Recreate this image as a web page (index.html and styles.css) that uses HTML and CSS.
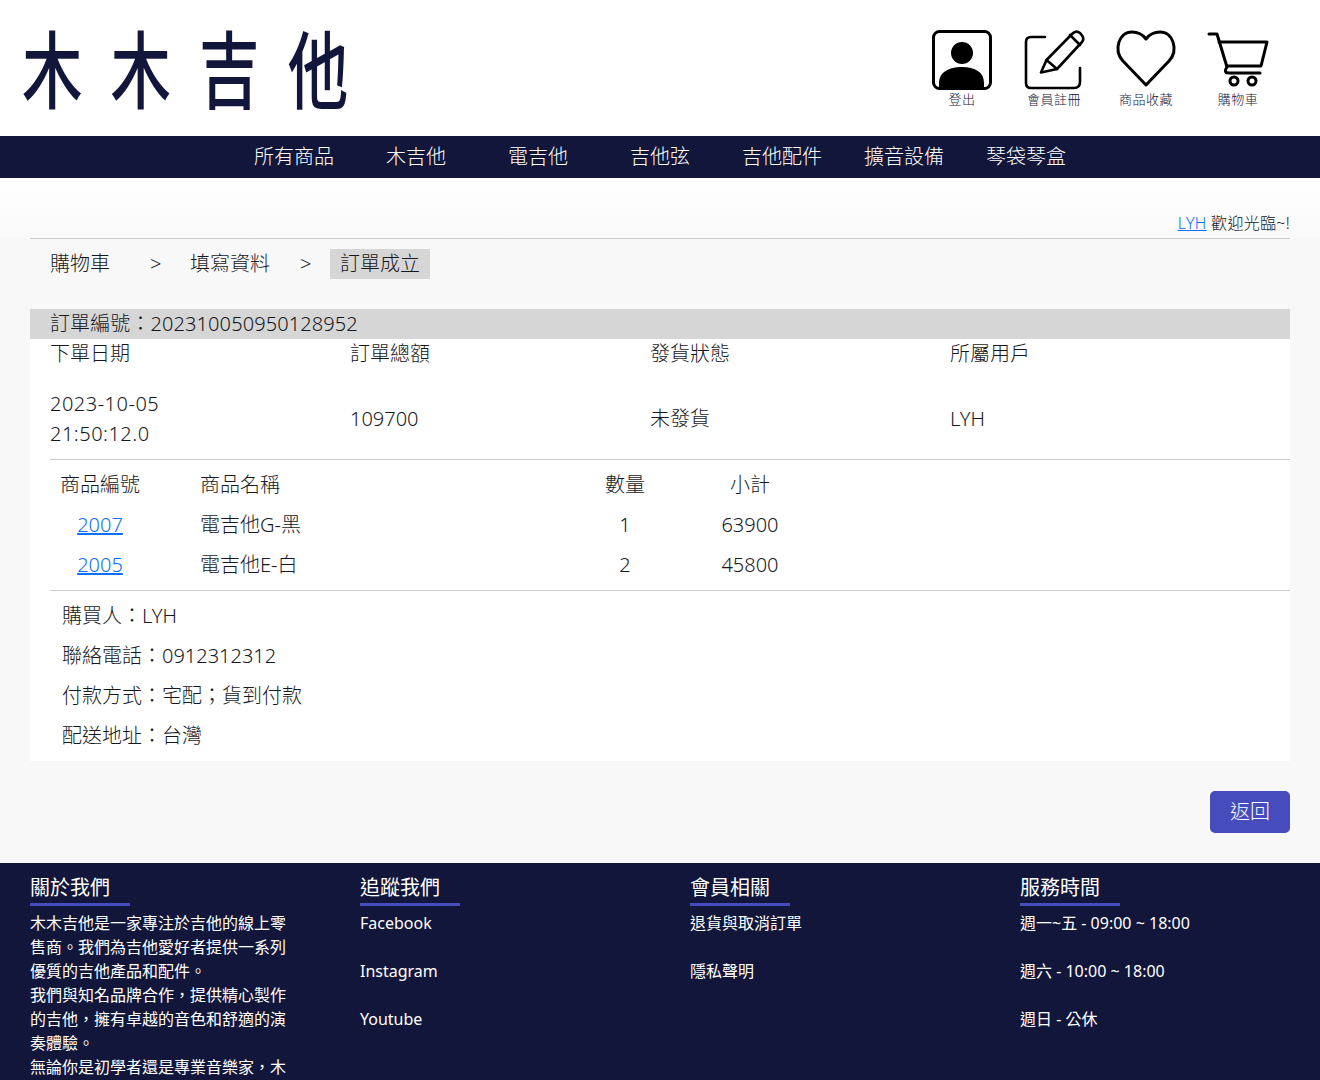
FILE: index.html
```html
<!DOCTYPE html>
<html lang="zh-Hant">
<head>
    <meta charset="UTF-8">
    <title>木木吉他</title>
    <link rel="stylesheet" href="styles.css">
</head>
<body>
    <!-- Header -->
    <header class="header">
        <a class="logo">木木吉他</a>
        <div class="tools">
            <a class="tool">
                <svg viewBox="0 0 60 60" width="60" height="60">
                    <rect x="1.5" y="1.5" width="57" height="57" rx="6" fill="none" stroke="#000" stroke-width="3"/>
                    <circle cx="30" cy="23" r="11"/>
                    <path d="M7 57 V53 C7 42 17 37 30 37 C43 37 52 42 52 53 V57 Z"/>
                </svg>
                <span>登出</span>
            </a>
            <a class="tool">
                <svg viewBox="0 0 60 60" width="60" height="60" fill="none" stroke="#000" stroke-width="2.6" stroke-linecap="round" stroke-linejoin="round">
                    <path d="M21 7 H7 Q2 7 2 12 V53 Q2 58 7 58 H50 Q56 58 56 52 V38"/>
                    <path d="M17 42.500 L22.500 30 L48 4 Q52 0 56 3 L58 5.500 Q60.500 9 58 12 L33 39 Z"/>
                    <path d="M22.500 30 L33 39 M46 5 L56 15"/>
                </svg>
                <span>會員註冊</span>
            </a>
            <a class="tool">
                <svg viewBox="0 0 60 60" width="60" height="60" fill="none" stroke="#000" stroke-width="3" stroke-linejoin="round">
                    <path d="M30 55 L7 31 C-3 20 3 2 16 2 C22 2 27 5 30 9 C33 5 38 2 44 2 C57 2 63 20 53 31 Z"/>
                </svg>
                <span>商品收藏</span>
            </a>
            <a class="tool">
                <svg viewBox="0 0 60 60" width="60" height="60" fill="none" stroke="#000" stroke-width="3" stroke-linecap="round" stroke-linejoin="round">
                    <path d="M1 4 H9 L19 37 Q15 43 21 43 H52"/>
                    <path d="M11 12 H59 L53 36 H19"/>
                    <circle cx="26" cy="51" r="4"/>
                    <circle cx="44" cy="51" r="4"/>
                </svg>
                <span>購物車</span>
            </a>
        </div>
    </header>

    <!-- Nav -->
    <nav class="nav">
        <a>所有商品</a>
        <a>木吉他</a>
        <a>電吉他</a>
        <a>吉他弦</a>
        <a>吉他配件</a>
        <a>擴音設備</a>
        <a>琴袋琴盒</a>
    </nav>

    <main class="main">
        <div class="welcome"><a href="#">LYH</a> 歡迎光臨~!</div>

        <div class="steps">
            <span class="step">購物車</span>
            <span class="sep">&gt;</span>
            <span class="step wide">填寫資料</span>
            <span class="sep short">&gt;</span>
            <span class="step current">訂單成立</span>
        </div>

        <section class="order">
            <div class="order-no">訂單編號：202310050950128952</div>

            <div class="summary">
                <div class="cell head">下單日期</div>
                <div class="cell head">訂單總額</div>
                <div class="cell head">發貨狀態</div>
                <div class="cell head">所屬用戶</div>
                <div class="cell date">2023-10-05<br>21:50:12.0</div>
                <div class="cell">109700</div>
                <div class="cell">未發貨</div>
                <div class="cell">LYH</div>
            </div>

            <div class="items">
                <div class="item">
                    <div class="c-id">商品編號</div>
                    <div class="c-name">商品名稱</div>
                    <div class="c-qty">數量</div>
                    <div class="c-sum">小計</div>
                </div>
                <div class="item">
                    <div class="c-id"><a href="#">2007</a></div>
                    <div class="c-name">電吉他G-黑</div>
                    <div class="c-qty">1</div>
                    <div class="c-sum">63900</div>
                </div>
                <div class="item">
                    <div class="c-id"><a href="#">2005</a></div>
                    <div class="c-name">電吉他E-白</div>
                    <div class="c-qty">2</div>
                    <div class="c-sum">45800</div>
                </div>
            </div>

            <div class="buyer">
                <p>購買人：LYH</p>
                <p>聯絡電話：0912312312</p>
                <p>付款方式：宅配；貨到付款</p>
                <p>配送地址：台灣</p>
            </div>
        </section>

        <div class="actions">
            <button class="back">返回</button>
        </div>
    </main>

    <!-- Footer -->
    <footer class="footer">
        <div class="col">
            <h3>關於我們</h3>
            <p class="about">木木吉他是一家專注於吉他的線上零售商。我們為吉他愛好者提供一系列優質的吉他產品和配件。<br>我們與知名品牌合作，提供精心製作的吉他，擁有卓越的音色和舒適的演奏體驗。<br>無論你是初學者還是專業音樂家，木</p>
        </div>
        <div class="col">
            <h3>追蹤我們</h3>
            <ul>
                <li>Facebook</li>
                <li>Instagram</li>
                <li>Youtube</li>
            </ul>
        </div>
        <div class="col">
            <h3>會員相關</h3>
            <ul>
                <li>退貨與取消訂單</li>
                <li>隱私聲明</li>
            </ul>
        </div>
        <div class="col">
            <h3>服務時間</h3>
            <ul>
                <li>週一~五 - 09:00 ~ 18:00</li>
                <li>週六 - 10:00 ~ 18:00</li>
                <li>週日 - 公休</li>
            </ul>
        </div>
    </footer>
</body>
</html>
```

FILE: styles.css
```css
* {
    box-sizing: border-box;
}

html, body {
    height: 1080px;
    overflow: hidden;
}

body {
    margin: 0;
    background: #f8f8f8;
    color: #16181d;
    font-family: "Noto Sans", "Noto Sans CJK TC", sans-serif;
    font-size: 20px;
    font-weight: 300;
}

a {
    color: #0d6efd;
}

/* Header */
.header {
    height: 136px;
    padding: 0 30px 0 22px;
    display: flex;
    justify-content: space-between;
    align-items: flex-start;
    background: #fff;
}

/* The logo is tall and narrow, so the type is squeezed sideways */
.logo {
    align-self: center;
    margin-bottom: 4px;
    font-family: "Noto Sans CJK TC", sans-serif;
    font-size: 84px;
    line-height: 1;
    letter-spacing: 39px;
    font-weight: 500;
    white-space: nowrap;
    color: #12163a;
    transform: scaleX(0.72);
    transform-origin: left center;
}

.tools {
    display: flex;
    margin-right: 22px;
    margin-top: 30px;
    gap: 32px;
}

.tool {
    width: 60px;
    display: flex;
    flex-direction: column;
    align-items: center;
    color: #12163a;
    font-size: 13px;
    line-height: 16px;
    font-weight: 300;
}

.tool svg {
    display: block;
    overflow: visible;
}

.tool span {
    margin-top: 1px;
    white-space: nowrap;
    letter-spacing: 0.5px;
}

/* Nav */
.nav {
    height: 42px;
    display: flex;
    justify-content: center;
    background: #12163a;
}

.nav a {
    width: 122px;
    text-align: center;
    color: #fff;
    line-height: 42px;
}

/* Main */
.main {
    height: 685px;
    padding: 0 30px;
    background: linear-gradient(#fff, #fafafa 60px, #f8f8f8 60px);
}

.welcome {
    height: 61px;
    padding-top: 33px;
    text-align: right;
    font-size: 16px;
    line-height: 24px;
    letter-spacing: 0.3px;
    border-bottom: 1px solid #ccc;
}

.steps {
    display: flex;
    height: 70px;
    padding: 10px 0 0 20px;
}

.step {
    height: 30px;
    line-height: 30px;
    width: 100px;
}

.step.wide {
    width: 110px;
}

.step.current {
    background: #d6d6d6;
    padding-left: 10px;
}

.sep {
    width: 40px;
    line-height: 30px;
}

.sep.short {
    width: 30px;
}

.order {
    background: #fff;
}

.order-no {
    height: 30px;
    padding-left: 20px;
    line-height: 30px;
    letter-spacing: 0.1px;
    background: #d6d6d6;
}

.summary {
    display: grid;
    grid-template-columns: repeat(4, 300px);
    grid-template-rows: 40px 80px;
    height: 121px;
    margin-left: 20px;
    border-bottom: 1px solid #ccc;
}

.cell {
    line-height: 30px;
    align-self: center;
}

.head {
    align-self: start;
}

.date {
    width: 120px;
    letter-spacing: 0.5px;
}

.items {
    margin-left: 20px;
    padding: 5px 0;
    border-bottom: 1px solid #ccc;
}

.item {
    display: flex;
    height: 40px;
    line-height: 40px;
}

.c-id {
    width: 100px;
    margin-right: 50px;
    text-align: center;
}

.c-name {
    width: 405px;
}

.c-qty {
    width: 40px;
    text-align: center;
}

.c-sum {
    width: 210px;
    text-align: center;
}

.buyer {
    padding: 5px 0 5px 32px;
}

.buyer p {
    margin: 0;
    line-height: 40px;
}

.actions {
    display: flex;
    justify-content: flex-end;
    margin-top: 30px;
}

.back {
    width: 80px;
    height: 42px;
    padding: 0 0 3px;
    border: 0;
    border-radius: 5px;
    background: #464cbb;
    color: #fff;
    font: inherit;
}

/* Footer */
.footer {
    height: 217px;
    padding: 0 30px;
    display: flex;
    gap: 60px;
    background: #12163a;
    color: #fff;
    font-size: 16px;
    font-weight: 400;
    overflow: hidden;
}

.col {
    width: 270px;
}

.col h3 {
    width: 100px;
    height: 43px;
    margin: 0 0 5px;
    padding-top: 10px;
    font-size: 20px;
    font-weight: 400;
    line-height: 30px;
    border-bottom: 3px solid #464cbb;
}

.col ul {
    list-style: none;
    margin: 0;
    padding: 0;
}

.col li {
    line-height: 24px;
    margin-bottom: 24px;
}

.about {
    margin: 0;
    line-height: 24px;
}
```
